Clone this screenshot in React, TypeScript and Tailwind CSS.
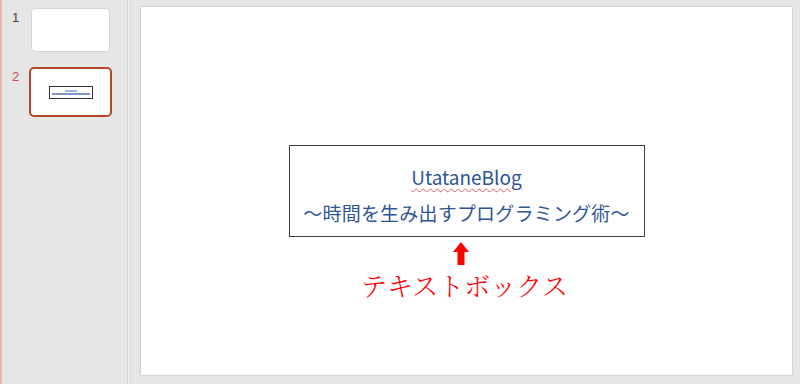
import React from "react"

const jp = { fontFamily: '"Noto Sans CJK JP", "Noto Sans", sans-serif' }

function Thumb({ n, active }: { n: number; active?: boolean }) {
  return (
    <div className="flex items-start">
      <div className={`w-[27px] pl-[10px] pt-[3px] text-[13px] leading-none ${active ? "text-[#c0504d]" : "text-[#444]"}`} style={{ fontFamily: '"Liberation Sans", sans-serif' }}>
        {n}
      </div>
      {active ? (
        <div className="w-[83px] h-[50px] rounded-[5px] border-2 border-[#b7472a] bg-white flex items-center justify-center">
          <div className="w-[44px] h-[13px] border border-[#333] flex flex-col items-center justify-center gap-[1px]">
            <div className="w-[12px] h-[2px] bg-[#9fb3dc]" />
            <div className="w-[38px] h-[2px] bg-[#7f98cc]" />
          </div>
        </div>
      ) : (
        <div className="ml-[2px] w-[79px] h-[44px] rounded-[4px] border border-[#d6d6d6] bg-white" />
      )}
    </div>
  )
}

export default function App() {
  return (
    <div className="w-[800px] h-[384px] flex bg-[#e6e6e6] overflow-hidden">
      {/* thumbnail rail */}
      <div className="w-[128px] h-full flex border-r border-[#d4d4d4]">
        <div className="w-[2px] h-full bg-[#e9b9a6]" />
        <div className="flex-1 flex flex-col gap-[15px] pt-[8px]">
          <Thumb n={1} />
          <Thumb n={2} active />
        </div>
      </div>
      <div className="w-[3px] h-full bg-[#ececec] border-r border-[#d9d9d9]" />

      {/* editing area */}
      <div className="flex-1 pl-[10px] pt-[7px] pr-[7px] pb-[9px]">
        <div className="w-[651px] h-[368px] bg-white shadow-[0_0_2px_rgba(0,0,0,0.25)] flex flex-col items-center pt-[138px]">
          <div className="w-[356px] h-[92px] border border-[#404040] flex flex-col items-center pt-[17px]" style={jp}>
            <div className="text-[19px] leading-[27px] text-[#2f5597] underline decoration-wavy decoration-[#e05a6a] decoration-1 underline-offset-[3px]">
              UtataneBlog
            </div>
            <div className="mt-[10px] text-[19px] leading-[26px] text-[#2f5597] tracking-[0.2px]">
              〜時間を生み出すプログラミング術〜
            </div>
          </div>
          <svg width="16" height="23" viewBox="0 0 16 23" className="mt-[5px] mr-[12px]">
            <polygon points="8,0 16,10 11.5,10 11.5,23 4.5,23 4.5,10 0,10" fill="#ff0000" />
          </svg>
          <div className="mt-[4px] mr-[4px] text-[26px] leading-[32px] text-[#ff0000] font-light" style={{ fontFamily: '"Noto Serif CJK JP", "Noto Sans CJK JP", serif' }}>
            テキストボックス
          </div>
        </div>
      </div>
    </div>
  )
}
